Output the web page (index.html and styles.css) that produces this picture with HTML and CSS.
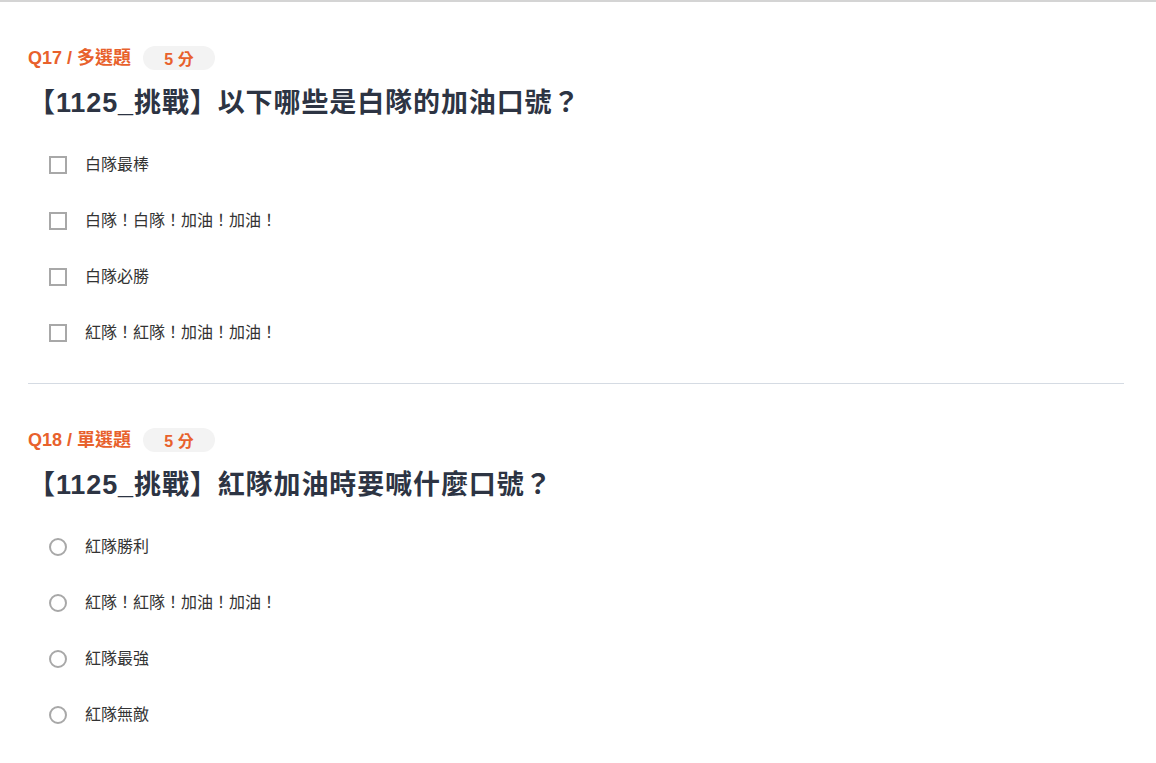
FILE: index.html
```html
<!DOCTYPE html>
<html lang="zh-Hant">
<head>
<meta charset="utf-8">
<link rel="stylesheet" href="styles.css">
</head>
<body>
<main class="quiz">
  <section class="question">
    <div class="q-head">
      <span class="q-label">Q17 / 多選題</span>
      <span class="q-score">5 分</span>
    </div>
    <h2 class="q-title">【1125_挑戰】以下哪些是白隊的加油口號？</h2>
    <ul class="options">
      <li class="option"><span class="box"></span><span class="opt-text">白隊最棒</span></li>
      <li class="option"><span class="box"></span><span class="opt-text">白隊！白隊！加油！加油！</span></li>
      <li class="option"><span class="box"></span><span class="opt-text">白隊必勝</span></li>
      <li class="option"><span class="box"></span><span class="opt-text">紅隊！紅隊！加油！加油！</span></li>
    </ul>
  </section>
  <section class="question">
    <div class="q-head">
      <span class="q-label">Q18 / 單選題</span>
      <span class="q-score">5 分</span>
    </div>
    <h2 class="q-title">【1125_挑戰】紅隊加油時要喊什麼口號？</h2>
    <ul class="options">
      <li class="option"><span class="box round"></span><span class="opt-text">紅隊勝利</span></li>
      <li class="option"><span class="box round"></span><span class="opt-text">紅隊！紅隊！加油！加油！</span></li>
      <li class="option"><span class="box round"></span><span class="opt-text">紅隊最強</span></li>
      <li class="option"><span class="box round"></span><span class="opt-text">紅隊無敵</span></li>
    </ul>
  </section>
</main>
</body>
</html>
```
FILE: styles.css
```css
html, body {
  margin: 0;
  padding: 0;
  background: #fff;
}
body {
  border-top: 2px solid #d4d4d4;
  font-family: "Liberation Sans", Arial, "Noto Sans CJK TC", sans-serif;
  color: #333;
}
.quiz {
  padding: 0 32px 0 28px;
}
.question {
  padding: 44px 0 39px;
}
.question + .question {
  border-top: 1px solid #d5dbe3;
  padding-top: 44px;
}
.q-head {
  display: flex;
  align-items: center;
  gap: 12px;
  height: 24px;
}
.q-label {
  color: #e8612c;
  font-size: 18px;
  font-weight: bold;
  line-height: 24px;
}
.q-score {
  display: inline-flex;
  align-items: center;
  justify-content: center;
  width: 72px;
  height: 24px;
  border-radius: 12px;
  background: #f3f3f3;
  color: #e8612c;
  font-size: 16px;
  font-weight: bold;
}
.q-title {
  margin: 15px 0 0;
  font-size: 27px;
  line-height: 36px;
  font-weight: bold;
  color: #2d3443;
  letter-spacing: 0.9px;
}
.options {
  list-style: none;
  margin: 31px 0 0;
  padding: 0 0 0 21px;
  display: flex;
  flex-direction: column;
  gap: 32px;
}
.option {
  display: flex;
  align-items: center;
  gap: 18px;
  height: 24px;
}
.box {
  width: 18px;
  height: 18px;
  box-sizing: border-box;
  border: 2px solid #a8a8a8;
  flex: none;
  margin-top: 2px;
}
.box.round {
  border-radius: 50%;
}
.opt-text {
  font-size: 16px;
  line-height: 24px;
  color: #333;
  margin-top: 1px;
}
```
